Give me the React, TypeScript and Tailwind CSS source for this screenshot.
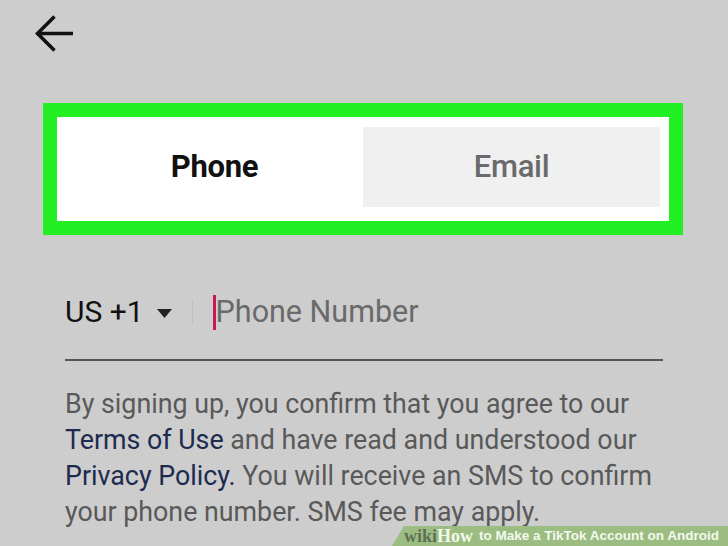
export default function App() {
  return (
    <div className="relative w-[728px] h-[546px] overflow-hidden bg-[#cdcdcd] font-['Roboto','Liberation_Sans',sans-serif]">
      {/* Back arrow */}
      <div className="pt-[15px] pl-[35px]">
        <svg width="40" height="38" viewBox="0 0 40 38" fill="none">
          <path d="M2.5 18.5H38" stroke="#111" strokeWidth="3.5" />
          <path d="M19.5 1.5L2.5 18.5L19.5 35.5" stroke="#111" strokeWidth="3.5" strokeLinejoin="miter" />
        </svg>
      </div>

      {/* Highlighted tab switch */}
      <div className="mt-[50px] ml-[43px] w-[640px] border-[14px] border-[#22f022] bg-white pt-[10px] pb-[14px] px-[9px]">
        <div className="flex h-[80px] rounded-[2px] overflow-hidden">
          <div className="flex-1 flex items-center justify-center bg-white shadow-[0_0_2px_rgba(0,0,0,0.08)]">
            <span className="text-[31px] font-bold text-[#111] tracking-[-0.3px]">Phone</span>
          </div>
          <div className="flex-1 flex items-center justify-center bg-[#f0f0f0]">
            <span className="text-[31px] font-medium text-[#6a6a6c] tracking-[-0.3px]">Email</span>
          </div>
        </div>
      </div>

      {/* Phone input */}
      <div className="mx-[65px] mt-[57px] flex items-center h-[40px]">
        <span className="text-[30px] text-[#111] leading-none">US +1</span>
        <svg width="15" height="9" viewBox="0 0 15 9" className="ml-[13px] mt-[3px]">
          <path d="M0 0H15L7.5 9Z" fill="#222" />
        </svg>
        <div className="ml-[20px] w-px h-[22px] bg-[#bdbdbd]" />
        <div className="ml-[20px] w-[3px] h-[35px] bg-[#c8185a]" />
        <span className="text-[30.5px] text-[#6a6a6a] leading-none">Phone Number</span>
      </div>
      <div className="mx-[65px] mt-[27px] w-[598px] h-[2px] bg-[#555]" />

      {/* Notice */}
      <p className="mx-[65px] mt-[25px] text-[26.8px] leading-[36px] text-[#595959] whitespace-nowrap">
        By signing up, you confirm that you agree to our
        <br />
        <span className="text-[#1c2b4e]">Terms of Use</span> and have read and understood our
        <br />
        <span className="text-[#1c2b4e]">Privacy Policy.</span> You will receive an SMS to confirm
        <br />
        your phone number. SMS fee may apply.
      </p>

      {/* wikiHow banner */}
      <div className="absolute right-0 bottom-0 h-[20px] w-[336px] bg-[#9cbd82] [clip-path:polygon(12px_0,100%_0,100%_100%,0_100%)] flex items-center pl-[12px]">
        <span className="font-['Liberation_Serif',serif] font-bold text-[18px] text-[#5e6f55] leading-none">wiki</span>
        <span className="font-['Liberation_Serif',serif] font-bold text-[18px] text-[#f4f8ee] leading-none">How</span>
        <span className="ml-[6px] font-['Liberation_Sans',sans-serif] font-bold text-[13.5px] text-[#f4f8ee] leading-none">
          to Make a TikTok Account on Android
        </span>
      </div>
    </div>
  );
}
